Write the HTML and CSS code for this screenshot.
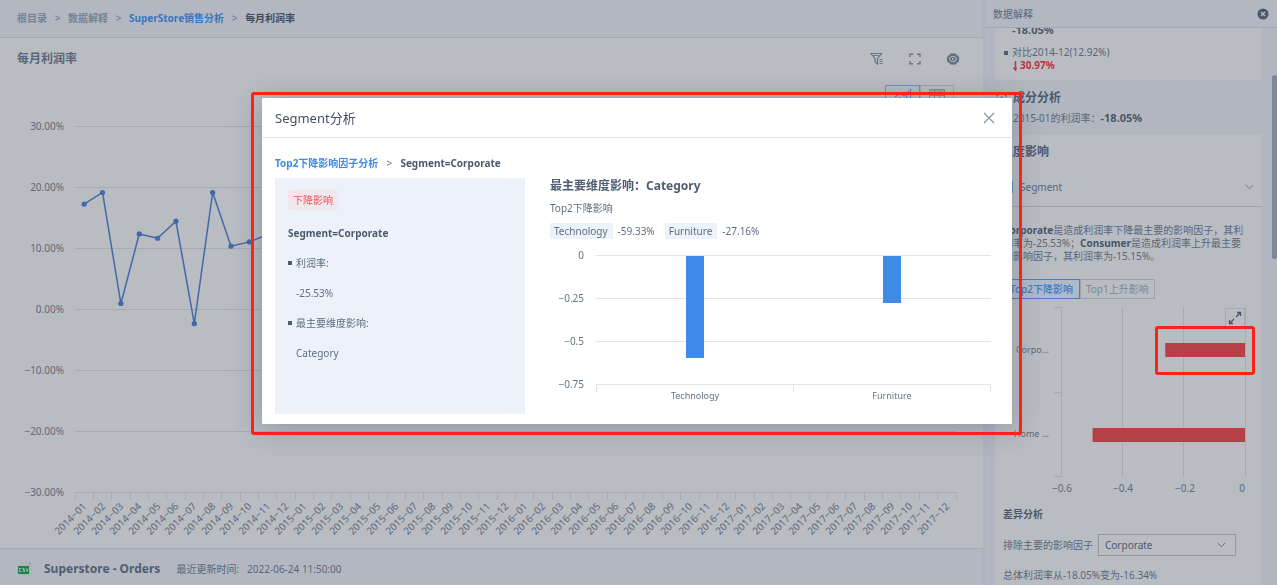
FILE: index.html
```html
<!DOCTYPE html>
<html lang="zh-CN">
<head>
<meta charset="utf-8">
<title>每月利润率</title>
<link rel="stylesheet" href="styles.css">
</head>
<body>
<div class="app">
  <main class="main">
    <nav class="crumbs">
      <a href="#">根目录</a><span class="sep">&gt;</span><a href="#">数据解释</a><span class="sep">&gt;</span><a href="#" class="active">SuperStore销售分析</a><span class="sep">&gt;</span><span class="current">每月利润率</span>
    </nav>
    <header class="chart-head">
      <h1>每月利润率</h1>
      <div class="tools">
        <button aria-label="筛选"><svg width="14" height="14" viewBox="0 0 14 14" fill="none" stroke="#667587"><path d="M1 1.500h10.500L7.500 6.500v5.500L5 10V6.500zM9.500 7.500h3M9.500 9.500h3M9.500 11.500h3M3.500 3.500h5" stroke-width="1.200"/></svg></button>
        <button aria-label="全屏"><svg width="14" height="14" viewBox="0 0 14 14" fill="none" stroke="#667587" stroke-width="1.400"><path d="M2 5V2.300h3M9 2.300h3V5M12 9v2.700H9M5 11.700H2V9"/></svg></button>
        <button aria-label="设置"><svg width="14" height="14" viewBox="0 0 14 14"><path d="M4.200 1.500h5.600l1 1.900h1.500L13.300 7l-1 3.600h-1.500l-1 1.900H4.200l-1-1.900H1.700L.7 7l1-3.600h1.500z" fill="#5f6e80"/><ellipse cx="7" cy="7" rx="3.400" ry="2.700" fill="none" stroke="#b9bcc1"/><circle cx="7" cy="7" r="1" fill="#b9bcc1"/></svg></button>
      </div>
    </header>
    <div class="view-switch">
      <button class="on" aria-label="图表"><svg width="18" height="14" viewBox="0 0 18 14" fill="none" stroke="#5b87c4"><path d="M1 9l5-4 4 3 5-5M16.500 1v11M12.500 6v6M5.500 9v3" stroke-width="1.300"/></svg></button>
      <button aria-label="表格"><svg width="18" height="14" viewBox="0 0 18 14" fill="none" stroke="#7f8a99"><path d="M1.500 1.500h15v11h-15zM1.500 3h15M1.500 7.500h15M6.500 2v10M11.500 2v10"/></svg></button>
    </div>
    <svg class="trend" id="trend" role="img" aria-label="每月利润率"></svg>
    <footer class="source">
      <svg width="15" height="16" viewBox="0 0 15 16"><path d="M3 1h9l3 3v11H3z" fill="#aeb5b5"/><path d="M12 1l2 2h-2z" fill="#7d8a8c"/><path d="M1 5h11v8H1z" fill="#237f4c"/><path d="M4.500 7.500H2.500v3h2M7.500 7.500H6V9h1.500v1.500H6M9 7.500l1 3 1-3" fill="none" stroke="#b3cfc0" stroke-width=".8"/></svg>
      <strong>Superstore - Orders</strong>
      <span>最近更新时间:</span>
      <time>2022-06-24 11:50:00</time>
    </footer>
  </main>

  <aside class="side">
    <header class="side-head">
      <span>数据解释</span>
      <button aria-label="关闭"><svg width="12" height="12" viewBox="0 0 12 12"><circle cx="6" cy="6" r="5.500" fill="#4a586b"/><path d="M4 4l4 4M8 4L4 8" stroke="#b9bfc9" stroke-width="1.300"/></svg></button>
    </header>
    <div class="side-body">
      <section class="card compare">
        <strong class="before">-18.05%</strong>
        <p class="bullet">对比2014-12(12.92%)</p>
        <strong class="drop"><svg width="7" height="10" viewBox="0 0 7 10"><path d="M3.500 0v8M1.500 6.500l2 2.500 1-2.500" fill="none" stroke="#bf3340" stroke-width="1.400"/></svg>30.97%</strong>
      </section>
      <div class="section-head">
        <svg width="13" height="13" viewBox="0 0 13 13"><path d="M4.500 2H3.200L1.500 5v3l1.700 3h1.300M8.500 2h1.300l1.700 3v3l-1.700 3H8.500M6.500 4.500v2" fill="none" stroke="#4a586b" stroke-width="1.300" stroke-dasharray="4 1.500"/></svg>
        <h2>成分分析</h2>
        <p>2015-01的利润率：<strong>-18.05%</strong></p>
      </div>
      <section class="card detail">
        <h3>维度影响</h3>
        <button class="picker"><i></i><span>Segment</span><svg width="9" height="6" viewBox="0 0 9 6"><path d="M.8 1l3.700 3.700L8.200 1" fill="none" stroke="#6f7b8b"/></svg></button>
        <p class="summary"><strong>Corporate</strong>是造成利润率下降最主要的影响因子，其利润率为-25.53%；<strong>Consumer</strong>是造成利润率上升最主要的影响因子，其利润率为-15.15%。</p>
        <div class="tabs"><button class="on">Top2下降影响</button><button>Top1上升影响</button></div>
        <div class="factor">
          <svg id="factor" role="img" aria-label="影响因子"></svg>
          <button class="expand" aria-label="放大"><svg width="14" height="14" viewBox="0 0 14 14" fill="none" stroke="#46546a" stroke-width="1.300"><path d="M8 6l4.500-4.500M9 1.500h3.500V5M6 8l-4.500 4.500M1.500 9v3.500H5"/></svg></button>
          <span class="mark mark-bar"></span>
        </div>
        <h4>差异分析</h4>
        <div class="exclude">
          <label for="exclude">排除主要的影响因子</label>
          <span class="select"><select id="exclude"><option>Corporate</option><option>Home Office</option></select><svg width="9" height="6" viewBox="0 0 9 6"><path d="M.8 1l3.700 3.700L8.200 1" fill="none" stroke="#5f6c7e"/></svg></span>
        </div>
        <p class="result">总体利润率从-18.05%变为-16.34%</p>
      </section>
      <i class="thumb"></i>
    </div>
  </aside>
</div>

<div class="overlay">
  <div class="dialog" role="dialog" aria-labelledby="dialog-title">
    <header class="dialog-head">
      <h2 id="dialog-title">Segment分析</h2>
      <button aria-label="关闭"><svg width="12" height="12" viewBox="0 0 12 12"><path d="M1 1l10 10M11 1L1 11" stroke="#8696ab" stroke-width="1.200"/></svg></button>
    </header>
    <div class="dialog-body">
      <nav class="path"><a href="#">Top2下降影响因子分析</a><span class="sep">&gt;</span><strong>Segment=Corporate</strong></nav>
      <div class="columns">
        <section class="facts">
          <span class="tag-down">下降影响</span>
          <strong>Segment=Corporate</strong>
          <dl>
            <dt>利润率:</dt><dd>-25.53%</dd>
            <dt>最主要维度影响:</dt><dd>Category</dd>
          </dl>
        </section>
        <section class="impact">
          <h3>最主要维度影响：Category</h3>
          <p>Top2下降影响</p>
          <div class="values"><span>Technology</span>-59.33%<span>Furniture</span>-27.16%</div>
          <svg id="impact" role="img" aria-label="Category"></svg>
        </section>
      </div>
    </div>
    <span class="mark mark-dialog"></span>
  </div>
</div>
<script src="charts.js"></script>
</body>
</html>
```

FILE: styles.css
```css
* { box-sizing: border-box; }
body {
  margin: 0;
  font: 10px/14px "Noto Sans", "Noto Sans CJK SC", sans-serif;
  color: #59677a;
  background: #b2b7c1;
  overflow: hidden;
}
h1, h2, h3, h4, p, dl, dd { margin: 0; }
button { padding: 0; border: 0; background: none; font: inherit; color: inherit; display: flex; align-items: center; }
a { color: inherit; text-decoration: none; }
svg { display: block; flex: none; }

.app { display: flex; height: 100vh; }
.main { flex: 1; min-width: 0; display: flex; flex-direction: column; background: #b9bcc1; }
.crumbs {
  height: 38px; padding: 0 17px 2px; display: flex; align-items: center;
  background: #b2b7c1; border-bottom: 1px solid #a4aab5;
  font-weight: 700; color: #768394;
}
.sep { width: 21px; text-align: center; font-weight: 400; color: #66758a; }
.crumbs .active { color: #3b76be; }
.crumbs .current { color: #424d60; }
.chart-head { display: flex; justify-content: space-between; align-items: center; padding: 0 23px 0 17px; height: 42px; }
h1 { font-size: 12px; color: #5a6779; }
.tools { display: flex; gap: 24px; }
.view-switch { display: flex; justify-content: flex-end; padding: 5px 29px 0 0; }
.view-switch button { width: 34px; height: 20px; justify-content: center; border: 1px solid #9da4ae; }
.view-switch .on { width: 35px; border-color: #6c8fbd; background: #b1bac8; }
.trend { flex: 1; min-height: 0; width: 100%; }
.source {
  height: 37px; padding: 4px 17px 0; display: flex; align-items: center;
  background: #b2b7c1; border-top: 1px solid #a4aab5;
}
.source strong { margin: 0 16px 0 12px; font-size: 12px; color: #505e71; }
.source time { margin-left: 8px; }

.side { width: 294px; display: flex; flex-direction: column; background: #b1b6c0; border-left: 2px solid #adb3bf; }
.side-head {
  height: 28px; flex: none; padding: 0 8px; display: flex; justify-content: space-between; align-items: center;
  border-bottom: 1px solid #a0a6b2; background: #b2b7c1;
}
.side-body { flex: 1; min-height: 0; overflow: hidden; position: relative; padding: 0 15px 0 10px; }
.card { background: #b9bcc1; }
.compare { margin-top: -8px; height: 60px; padding-left: 17px; line-height: 13px; }
.compare strong { display: flex; align-items: center; gap: 1px; }
.before { font-size: 11px; color: #4b596c; padding-top: 3px; padding-bottom: 10px; }
.drop { color: #bf3340; }
.bullet, dt { position: relative; }
.bullet::before, dt::before { content: ""; position: absolute; left: -8px; top: 50%; width: 4px; height: 4px; margin-top: -2px; background: #4f5d70; }
.section-head { display: grid; grid-template-columns: 13px 1fr; column-gap: 5px; align-items: center; padding: 8px 0; height: 55px; line-height: 20px; }
.section-head h2 { font-size: 12px; color: #4b596c; }
.section-head p { grid-column: 2; }
.section-head strong, .summary strong { color: #48566a; }
.section-head strong { font-size: 11px; }
.detail { padding: 9px 0 0; height: 600px; }
.detail h3 { font-size: 12px; line-height: 16px; padding-left: 6px; color: #4b596c; }
.picker { width: 100%; height: 40px; margin-top: 7px; padding: 0 8px 0 11px; border-bottom: 1px solid #9ea4ae; }
.picker i { width: 7px; height: 12px; background: #5e94c8; margin-right: 7px; }
.picker span { flex: 1; text-align: left; }
.summary { padding: 17px 16px 0 8px; line-height: 13px; }
.tabs { display: flex; padding: 16px 8px 0; }
.tabs button { height: 20px; padding: 0 6px; border: 1px solid #9ca3ad; color: #7b8796; }
.tabs button + button { padding: 0 5px; }
.tabs .on { border-color: #4b7fc1; background: #b0b9c7; color: #3f78be; font-weight: 500; }
.factor { position: relative; margin-top: 5px; height: 192px; }
.factor > svg { width: 100%; height: 100%; }
.expand { position: absolute; right: 17px; top: 4px; width: 20px; height: 20px; justify-content: center; border: 1px solid #a3aab3; background: #b9bcc1; }
h4 { font-size: 10px; padding: 11px 8px 0; color: #4b596c; }
.exclude { display: flex; align-items: center; gap: 5px; padding: 13px 26px 0 8px; }
.exclude label { white-space: nowrap; }
.select { position: relative; flex: 1; display: flex; }
.select select { appearance: none; width: 100%; height: 22px; border: 1px solid #9099a7; border-radius: 0; padding: 0 6px; background: none; font: inherit; color: #4d5b6e; }
.select svg { position: absolute; right: 10px; top: 8px; pointer-events: none; }
.result { padding: 12px 8px 0; }
.thumb { position: absolute; right: 0; top: 47px; width: 5px; height: 184px; border-radius: 3px; background: #7b879a; }

.overlay { position: fixed; inset: 0; padding: 98px 3px 0 0; display: flex; justify-content: center; align-items: flex-start; }
.dialog { position: relative; width: 750px; max-width: 90vw; background: #fff; border-radius: 1px; color: #5f6e82; box-shadow: 0 4px 30px rgba(50, 65, 90, .32); }
.dialog-head { height: 40px; padding: 0 17px 0 13px; display: flex; align-items: center; justify-content: space-between; border-bottom: 1px solid #e1e5ee; }
.dialog-head h2 { font-size: 13px; font-weight: 400; color: #444f64; }
.dialog-body { padding: 18px 21px 10px 13px; }
.path { display: flex; }
.path a { color: #3d8be8; font-weight: 700; }
.path .sep { width: 22px; }
.path strong, .facts strong { color: #4c5a6e; }
.columns { display: flex; gap: 25px; padding-top: 8px; }
.facts { width: 250px; height: 236px; padding: 12px 13px; background: #edf2fa; border-radius: 1px; display: flex; flex-direction: column; align-items: flex-start; }
.tag-down { height: 20px; line-height: 20px; padding: 0 5px; border-radius: 1px; background: #efe8ed; color: #f2545b; }
.facts strong { margin-top: 16px; }
.facts dl { margin-top: 8px; padding-left: 8px; line-height: 30px; }
.impact { flex: 1; min-width: 0; display: flex; flex-direction: column; }
.impact h3 { font-size: 12px; line-height: 16px; color: #4f5d71; }
.impact p { margin-top: 7px; }
.values { display: flex; align-items: center; margin-top: 8px; white-space: pre; }
.values span { height: 16px; line-height: 16px; margin-right: 5px; padding: 0 5px 0 4px; background: #edf3fa; border-radius: 1px; }
.values span + span { margin-left: 10px; }
#impact { width: 100%; height: 170px; }

.mark { position: absolute; border: 3px solid #fb2318; border-radius: 3px; pointer-events: none; }
.mark-dialog { inset: -6px -10px -11px -11px; }
.mark-bar { right: 7px; top: 22px; width: 100px; height: 49px; }

.axis { font-size: 10px; fill: #5d6a7c; }
.axis-soft { font-size: 10px; fill: #65738a; }
.name { font-size: 9px; }
.grid { stroke: #a5abb6; }
.grid-soft { stroke: #e1e4ed; }
.end { text-anchor: end; }
.mid { text-anchor: middle; }
.line { fill: none; stroke: #4168a8; stroke-width: 1.5; }
.dot { fill: #4168a8; }
.neg { fill: #b54046; }
.bar { fill: #3f8ce8; }
```

FILE: charts.js
```js
const line = (x1, y1, x2, y2, c) => `<path d="M${x1} ${y1}L${x2} ${y2}" class="${c}"/>`;
const rect = (x, y, w, h, c) => `<rect x="${x}" y="${y}" width="${w}" height="${h}" class="${c}"/>`;
const text = (x, y, s, c, extra = "") => `<text x="${x}" y="${y}" class="${c}" ${extra}>${s}</text>`;
const snap = v => Math.floor(v) + 0.5;

function drawTrend() {
  const el = document.getElementById("trend");
  const left = 75, right = el.clientWidth - 27, top = 21, bottom = el.clientHeight - 56;
  const y = v => bottom - (v + 30) / 60 * (bottom - top);
  const step = (right - left) / 48;
  let out = "";
  for (let v = -30; v <= 30; v += 10) {
    out += line(left, snap(y(v)), right, snap(y(v)), "grid");
    out += text(64, Math.round(y(v)) + 4, (v < 0 ? "−" : "") + Math.abs(v) + ".00%", "axis end");
  }
  for (let i = 0; i <= 48; i++) {
    const x = snap(left + step * i);
    out += line(x, bottom, x, bottom + 8, "grid");
    if (i === 48) break;
    const name = 2014 + Math.floor(i / 12) + "−" + String(i % 12 + 1).padStart(2, "0");
    const tx = Math.round(left + step * (i + 0.5)) + 3, ty = bottom + 15;
    out += text(tx, ty, name, "axis end", `transform="rotate(-45 ${tx} ${ty})"`);
  }
  const values = [17.2, 19.1, 0.9, 12.3, 11.6, 14.4, -2.4, 19.1, 10.3, 11, 12.2, 12.9];
  const pts = values.map((v, i) => [left + step * (i + 0.5), y(v)]);
  out += `<polyline class="line" points="${pts.join(" ")}"/>`;
  pts.forEach(p => out += `<circle cx="${p[0]}" cy="${p[1]}" r="2.6" class="dot"/>`);
  el.innerHTML = out;
}

function drawFactor() {
  const el = document.getElementById("factor");
  const left = 66, right = el.clientWidth - 17, top = 3, bottom = 173;
  const x = v => right + v / 0.6 * (right - left);
  let out = "";
  [-0.6, -0.4, -0.2, 0].forEach(v => {
    out += line(snap(x(v)), top, snap(x(v)), bottom, "grid");
    out += text(Math.round(x(v)) + (v ? 1 : -3), bottom + 15, v ? "−" + -v : "0", "axis mid");
  });
  [top + 0.5, top + 85.5, bottom - 0.5].forEach(t => out += line(left - 7, t, left, t, "grid"));
  out += text(54, 49, "Corpo...", "axis name end") + text(54, 133, "Home ...", "axis name end");
  out += rect(x(-0.26), 39, right - x(-0.26), 14, "neg") + rect(x(-0.497), 124, right - x(-0.497), 14, "neg");
  el.innerHTML = out;
}

function drawImpact() {
  const el = document.getElementById("impact");
  const left = 46, right = el.clientWidth, top = 17, step = 43;
  let out = "";
  ["0", "−0.25", "−0.5", "−0.75"].forEach((s, i) => {
    out += line(left, top + step * i - 0.5, right, top + step * i - 0.5, "grid-soft");
    out += text(34, top + step * i + 3, s, "axis-soft end");
  });
  const w = right - left, base = top + step * 3;
  [0, 0.5, 1].forEach(f => { const t = snap(left + (w - 1) * f); out += line(t, base, t, base + 7, "grid-soft"); });
  [["Technology", 0.5933], ["Furniture", 0.2716]].forEach(([s, v], i) => {
    const c = Math.round(left + w * (i + 0.5) / 2);
    out += rect(c - 9, top, 18, Math.round(v / 0.25 * step), "bar");
    out += text(c, base + 14, s, "axis-soft name mid");
  });
  el.innerHTML = out;
}

function draw() { drawTrend(); drawFactor(); drawImpact(); }
draw();
addEventListener("resize", draw);
```
